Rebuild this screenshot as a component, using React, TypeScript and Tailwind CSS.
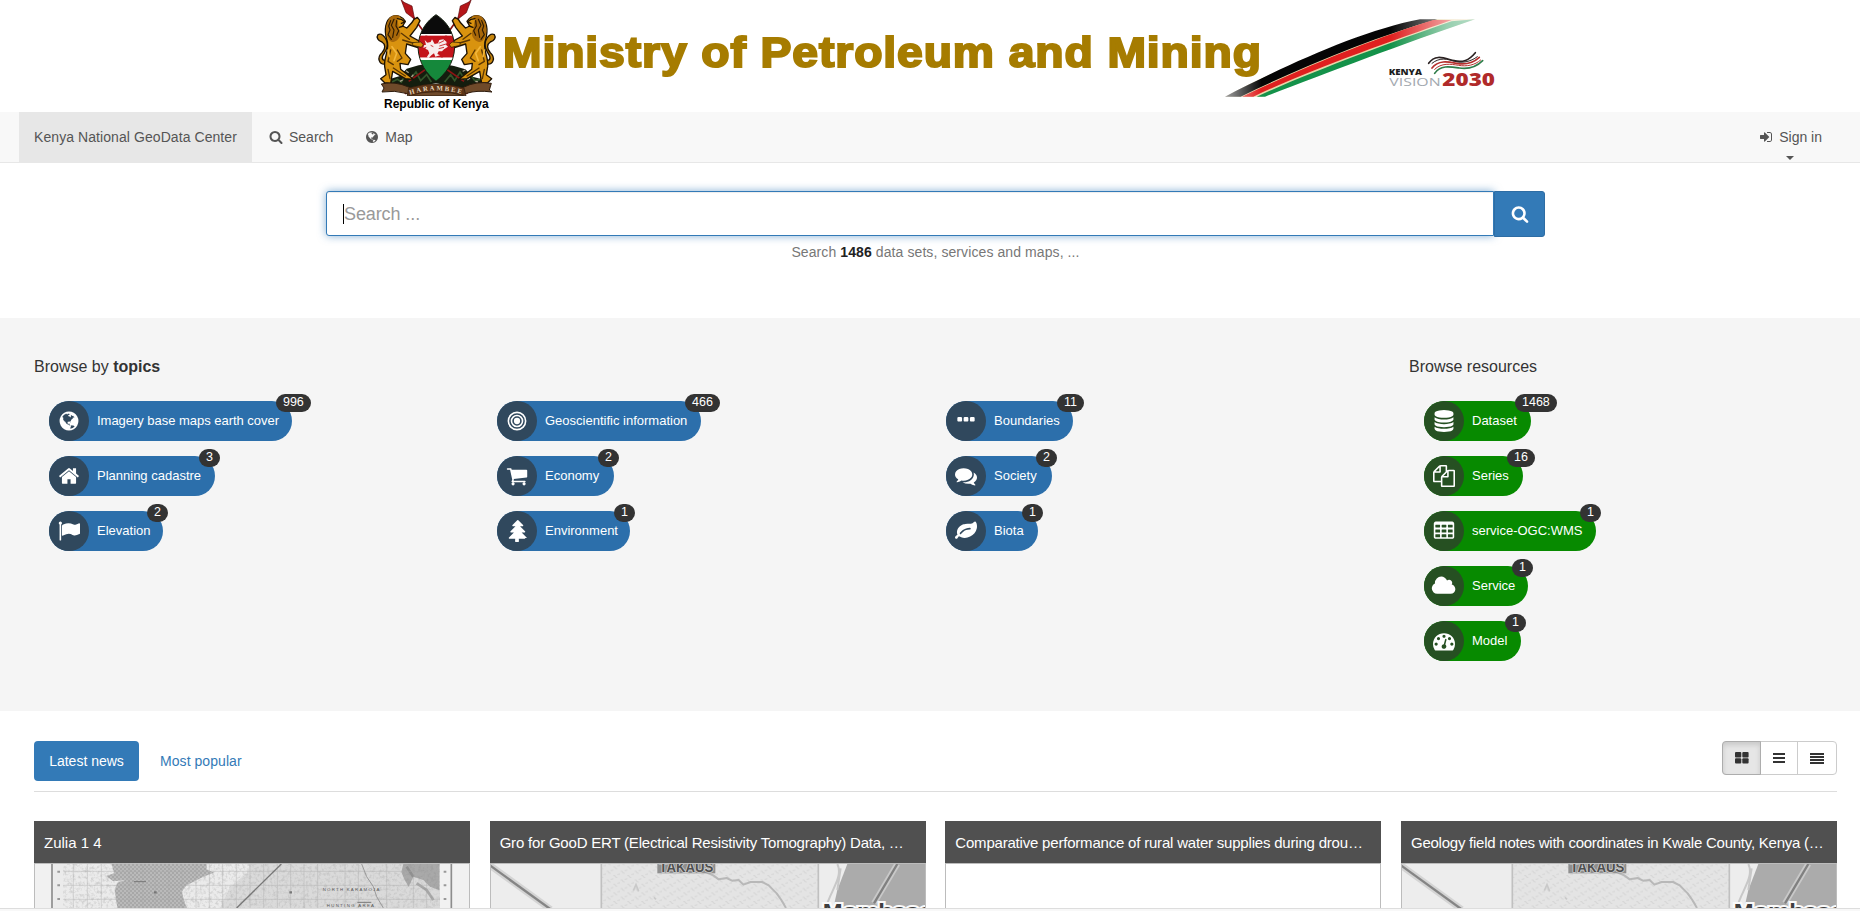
import type { ReactNode } from 'react';

type IconProps = { className?: string };

const ICONS = {
  search:
    'M1216 832q0-185-131.5-316.5t-316.5-131.5-316.5 131.5-131.5 316.5 131.5 316.5 316.5 131.5 316.5-131.5 131.5-316.5zm512 832q0 52-38 90t-90 38q-54 0-90-38l-343-342q-179 124-399 124-143 0-273.5-55.5t-225-150-150-225-55.5-273.5 55.5-273.5 150-225 225-150 273.5-55.5 273.5 55.5 225 150 150 225 55.5 273.5q0 220-124 399l343 343q37 37 37 90z',
  globe:
    'M896 128q209 0 385.5 103t279.5 279.5 103 385.5-103 385.5-279.5 279.5-385.5 103-385.5-103-279.5-279.5-103-385.5 103-385.5 279.5-279.5 385.5-103zm274 521q-2 1-9.5 9.5t-13.5 9.5q2 0 4.5-5t5-11 3.5-7q6-7 22-15 14-6 52-12 34-8 51 11-2-2 9.5-13t14.5-12q3-2 15-4.5t15-7.5l2-22q-12 1-17.5-7t-6.5-21q0 2-6 8 0-7-4.5-8t-11.5 1-9 1q-10-3-15-7.5t-8-16.5-4-15q-2-5-9.5-11t-9.5-10q-1-2-2.5-5.5t-3-6.5-4-5.5-5.5-2.5-7 5-7.5 10-4.5 5q-3-2-6-1.5t-4.5 1-4.5 3-5 3.5q-3 2-8.5 3t-8.5 2q15-5-1-11-10-4-16-3 9-4 7.5-12t-8.5-14h5q-1-4-8.5-8.5t-17.5-8.5-13-6q-8-5-34-9.5t-33-.5q-5 6-4.5 10.5t4 14 3.5 12.5q1 6-5.5 13t-6.5 12q0 7 14 15.5t10 21.5q-3 8-16 16t-16 12q-5 8-1.5 18.5t10.5 16.5q2 2 1.5 4t-3.5 4.5-5.5 4-6.5 3.5l-3 2q-11 5-20.5-6t-13.5-26q-7-25-16-30-23-8-29 1-5-13-41-26-25-9-58-4 6-1 0-15-7-15-19-12 3-6 4-17.5t1-13.5q3-13 12-23 1-1 7-8.5t9.5-13.5.5-6q35 4 50-11 5-5 11.5-17t10.5-17q9-6 14-5.5t14.5 5.5 14.5 5q14 1 15.5-11t-7.5-20q12 1 3-17-4-7-8-9-12-4-27 5-8 4 2 8-1-1-9.5 10.5t-16.5 17.5-16-5q-1-1-5.5-13.5t-9.5-13.5q-8 0-16 15 3-8-11-15t-24-8q19-12-8-27-7-4-20.5-5t-19.5 4q-5 7-5.5 11.5t5 8 10.5 5.5 11.5 4 8.5 3q14 10 8 14-2 1-8.5 3.5t-11.5 4.5-6 4q-3 4 0 14t-2 14q-5-5-9-17.5t-7-16.5q7 9-25 6l-10-1q-4 0-16 2t-20.5 1-13.5-8q-4-8 0-20 1-4 4-2-4-3-11-9.5t-10-8.5q-46 15-94 41 6 1 12-1 5-2 13-6.5t10-5.5q34-14 42-7l5-5q14 16 20 25-7-4-30-1-20 6-22 12 7 12 5 18-4-3-11.5-10t-14.5-11-15-5q-16 0-22 1-146 80-235 222 7 7 12 8 4 1 5 9t2.5 11 11.5-3q9 8 3 19 1-1 44 27 19 17 21 21 3 11-10 18-1-2-9-9t-9-4q-3 5 .5 18.5t10.5 12.5q-7 0-9.5 16t-2.5 35.5-1 23.5l2 1q-3 12 5.5 34.5t21.5 19.5q-13 3 20 43 6 8 8 9 3 2 12 7.5t15 10 10 10.5q4 5 10 22.5t14 23.5q-2 6 9.5 20t10.5 23q-1 0-2.5 1t-2.5 1q3 7 15.5 14t15.5 13q1 3 2 10t3 11 8 2q2-20-24-62-15-25-17-29-3-5-5.5-15.5t-4.5-14.5q2 0 6 1.5t8.5 3.5 7.5 4 2 3q-3 7 2 17.5t12 18.5 17 19 12 13q6 6 14 19.5t0 13.5q9 0 20 10.5t17 19.5q5 8 8 26t5 24q2 7 8.5 13.5t12.5 9.5l16 8 13 7q5 2 18.5 10.5t21.5 11.5q10 4 16 4t14.5-2.5 13.5-3.5q15-2 29 15t21 21q36 19 55 11-2 1 .5 7.5t8 15.5 9 14.5 5.5 8.5q5 6 18 15t18 15q6-4 7-9-3 8 7 20t18 10q14-3 14-32-31 15-49-18 0-1-2.5-5.5t-4-8.5-2.5-8.5 0-7.5 5-3q9 0 10-3.5t-2-12.5-4-13q-1-8-11-20t-12-15q-5 9-16 8t-16-9q0 1-1.5 5.5t-1.5 6.5q-13 0-15-1 1-3 2.5-17.5t3.5-22.5q1-4 5.5-12t7.5-14.5 4-12.5-4.5-9.5-17.5-2.5q-19 1-26 20-1 3-3 10.5t-5 11.5-9 7q-7 3-24 2t-24-5q-13-8-22.5-29t-9.5-37q0-10 2.5-26.5t3-25-5.5-24.5q3-2 9-9.5t10-10.5q2-1 4.5-1.5t4.5 0 4-1.5 3-6q-1-1-4-3-3-3-4-3 7 3 28.5-1.5t27.5 1.5q15 11 22-2 0-1-2.5-9.5t-.5-13.5q5 27 29 9 3 3 15.5 5t17.5 5q3 2 7 5.5t5.5 4.5 5-.5 8.5-6.5q10 14 12 24 11 40 19 44 7 3 11 2t4.5-9.5 0-14-1.5-12.5l-1-8v-18l-1-8q-15-3-18.5-12t1.5-18.5 15-18.5q1-1 8-3.5t15.5-6.5 12.5-8q21-19 15-35 7 0 11-9-1 0-5-3t-7.5-5-4.5-2q9-5 2-16 5-3 7.5-11t7.5-10q9 12 21 2 7-8 1-16 5-7 20.5-10.5t18.5-9.5q7 2 8-2t1-12 3-12q4-5 15-9t13-5l17-11q3-4 0-4 18 2 31-11 10-11-6-20 3-6-3-9.5t-15-5.5q3-1 11.5-.5t10.5-1.5q15-10-7-16-17-5-43 12zm-163 877q206-36 351-189-3-3-12.5-4.5t-12.5-3.5q-18-7-24-8 1-7-2.5-13t-8-9-12.5-8-11-7q-2-2-7-6t-7-5.5-7.5-4.5-8.5-2-10 1l-3 1q-3 1-5.5 2.5t-5.5 3-4 3 0 2.5q-21-17-36-22-5-1-11-5.5t-10.5-7-10-1.5-11.5 7q-5 5-6 15t-2 13q-7-5 0-17.5t2-18.5q-3-6-10.5-4.5t-12 4.5-11.5 8.5-9 6.5-8.5 5.5-8.5 7.5q-3 4-6 12t-5 11q-2-4-11.5-6.5t-9.5-5.5q2 10 4 35t5 38q7 31-12 48-27 25-29 40-4 22 12 26 0 7-8 20.5t-7 21.5q0 6 2 16z',
  home: 'M1472 992v480q0 26-19 45t-45 19h-384v-384h-256v384h-384q-26 0-45-19t-19-45v-480q0-1 .5-3t.5-3l575-474 575 474q1 2 1 6zm223-69l-62 74q-8 9-21 11h-3q-13 0-21-7l-692-577-692 577q-12 8-24 7-13-2-21-11l-62-74q-8-10-7-23.5t11-21.5l719-599q32-26 76-26t76 26l244 204v-195q0-14 9-23t23-9h192q14 0 23 9t9 23v408l219 182q10 8 11 21.5t-7 23.5z',
  flag: 'M320 256q0 72-64 110v1266q0 13-9.5 22.5t-22.5 9.5h-64q-13 0-22.5-9.5t-9.5-22.5v-1266q-64-38-64-110 0-53 37.5-90.5t90.5-37.5 90.5 37.5 37.5 90.5zm1472 64v763q0 25-12.5 38.5t-39.5 27.5q-215 116-369 116-61 0-123.5-22t-108.5-48-115.5-48-142.5-22q-192 0-464 146-17 9-33 9-26 0-45-19t-19-45v-742q0-32 31-55 21-14 79-43 236-120 421-120 107 0 200 29t219 88q38 19 88 19 54 0 117.5-21t110-47 88-47 54.5-21q26 0 45 19t19 45z',
  cart: 'M704 1536q0 52-38 90t-90 38-90-38-38-90 38-90 90-38 90 38 38 90zm896 0q0 52-38 90t-90 38-90-38-38-90 38-90 90-38 90 38 38 90zm128-1088v512q0 24-16.5 42.5t-40.5 21.5l-1044 122q13 60 13 70 0 16-24 64h920q26 0 45 19t19 45-19 45-45 19h-1024q-26 0-45-19t-19-45q0-11 8-31.5t16-36 21.5-40 15.5-29.5l-177-823h-204q-26 0-45-19t-19-45 19-45 45-19h256q16 0 28.5 6.5t19.5 15.5 13 24.5 8 26 5.5 29.5 4.5 26h1201q26 0 45 19t19 45z',
  tree: 'M1568 1472q0 26-19 45t-45 19h-462q1 17 6 87.5t5 108.5q0 25-18 42.5t-43 17.5h-192q-25 0-43-17.5t-18-42.5q0-38 5-108.5t6-87.5h-462q-26 0-45-19t-19-45 19-45l402-403h-229q-26 0-45-19t-19-45 19-45l402-403h-197q-26 0-45-19t-19-45 19-45l384-384q19-19 45-19t45 19l384 384q19 19 19 45t-19 45-45 19h-197l402 403q19 19 19 45t-19 45-45 19h-229l402 403q19 19 19 45z',
  dots: 'M576 656v192q0 40-28 68t-68 28h-192q-40 0-68-28t-28-68v-192q0-40 28-68t68-28h192q40 0 68 28t28 68zm512 0v192q0 40-28 68t-68 28h-192q-40 0-68-28t-28-68v-192q0-40 28-68t68-28h192q40 0 68 28t28 68zm512 0v192q0 40-28 68t-68 28h-192q-40 0-68-28t-28-68v-192q0-40 28-68t68-28h192q40 0 68 28t28 68z',
  comments:
    'M1408 768q0 139-94 257t-256.5 186.5-353.5 68.5q-86 0-176-16-124 88-278 128-36 9-86 16h-3q-11 0-20.5-8t-11.5-21q-1-3-1-6.5t.5-6.5 2-6l2.5-5 3.5-5.5 4-5 4.5-5 4-4.5q5-6 23-25t26-29.5 22.5-29 25-38.5 20.5-44q-124-72-195-177t-71-224q0-139 94-257t256.5-186.5 353.5-68.5 353.5 68.5 256.5 186.5 94 257zm384 256q0 120-71 224.5t-195 176.5q10 24 20.5 44t25 38.5 22.5 29 26 29.5 23 25q1 1 4 4.5t4.5 5 4 5 3.5 5.5l2.5 5 2 6 .5 6.5-1 6.5q-3 14-13 22t-22 7q-50-7-86-16-154-40-278-128-90 16-176 16-271 0-472-132 58 4 88 4 161 0 309-45t264-129q125-92 192-212t67-254q0-77-23-152 129 71 204 178t75 230z',
  leaf: 'M1280 704q0-26-19-45t-45-19q-172 0-318 49.5t-259.5 134-235.5 219.5q-19 21-19 45 0 26 19 45t45 19q24 0 45-19 27-24 74-71t67-66q137-124 268.5-176t313.5-52q26 0 45-19t19-45zm512-198q0 95-20 193-46 224-184.5 383t-357.5 268q-214 108-438 108-148 0-286-47-15-5-88-42t-96-37q-16 0-39.5 32t-45 70-52.5 70-60 32q-43 0-63.5-17.5t-45.5-59.5q-2-4-6-11t-5.5-10-3-9.5-1.5-13.5q0-35 31-73.5t68-65.5 68-56 31-48q0-4-14-38t-16-44q-9-51-9-104 0-115 43.5-220t119-184.5 170.5-139 204-95.5q55-18 145-25.5t179.5-9 178.5-6 163.5-24 113.5-56.5l29.5-29.5 29.5-28 27-20 36.5-16 43.5-4.5q39 0 70.5 46t47.5 112 24 124 8 96z',
  database:
    'M896 768q237 0 443-43t325-127v170q0 69-103 128t-280 93.5-385 34.5-385-34.5-280-93.5-103-128v-170q119 84 325 127t443 43zm0 768q237 0 443-43t325-127v170q0 69-103 128t-280 93.5-385 34.5-385-34.5-280-93.5-103-128v-170q119 84 325 127t443 43zm0-384q237 0 443-43t325-127v170q0 69-103 128t-280 93.5-385 34.5-385-34.5-280-93.5-103-128v-170q119 84 325 127t443 43zm0-1152q208 0 385 34.5t280 93.5 103 128v128q0 69-103 128t-280 93.5-385 34.5-385-34.5-280-93.5-103-128v-128q0-69 103-128t280-93.5 385-34.5z',
  files:
    'M1696 384q40 0 68 28t28 68v1216q0 40-28 68t-68 28h-960q-40 0-68-28t-28-68v-288h-544q-40 0-68-28t-28-68v-672q0-40 20-88t48-76l408-408q28-28 76-48t88-20h416q40 0 68 28t28 68v328q68-40 128-40h416zm-544 213l-299 299h299v-299zm-640-384l-299 299h299v-299zm196 647l316-316v-416h-384v416q0 40-28 68t-68 28h-416v640h512v-256q0-40 20-88t48-76zm956 804v-1152h-384v416q0 40-28 68t-68 28h-416v640h896z',
  table:
    'M224 128h1344q66 0 113 47t47 113v1088q0 66-47 113t-113 47h-1344q-66 0-113-47t-47-113v-1088q0-66 47-113t113-47zm-32 288v160q0 32 32 32h320q32 0 32-32v-160q0-32-32-32h-320q-32 0-32 32zm512 0v160q0 32 32 32h320q32 0 32-32v-160q0-32-32-32h-320q-32 0-32 32zm512 0v160q0 32 32 32h320q32 0 32-32v-160q0-32-32-32h-320q-32 0-32 32zm-1024 384v192q0 32 32 32h320q32 0 32-32v-192q0-32-32-32h-320q-32 0-32 32zm512 0v192q0 32 32 32h320q32 0 32-32v-192q0-32-32-32h-320q-32 0-32 32zm512 0v192q0 32 32 32h320q32 0 32-32v-192q0-32-32-32h-320q-32 0-32 32zm-1024 384v192q0 32 32 32h320q32 0 32-32v-192q0-32-32-32h-320q-32 0-32 32zm512 0v192q0 32 32 32h320q32 0 32-32v-192q0-32-32-32h-320q-32 0-32 32zm512 0v192q0 32 32 32h320q32 0 32-32v-192q0-32-32-32h-320q-32 0-32 32z',
  gauge:
    'M384 1152q0-53-37.5-90.5t-90.5-37.5-90.5 37.5-37.5 90.5 37.5 90.5 90.5 37.5 90.5-37.5 37.5-90.5zm192-448q0-53-37.5-90.5t-90.5-37.5-90.5 37.5-37.5 90.5 37.5 90.5 90.5 37.5 90.5-37.5 37.5-90.5zm428 481l101-382q6-26-7.5-48.5t-38.5-29.5-48 6.5-30 39.5l-101 382q-60 5-107 43.5t-63 98.5q-20 77 20 146t117 89 146-20 89-117q16-60-6-117t-72-91zm660-33q0-53-37.5-90.5t-90.5-37.5-90.5 37.5-37.5 90.5 37.5 90.5 90.5 37.5 90.5-37.5 37.5-90.5zm-640-640q0-53-37.5-90.5t-90.5-37.5-90.5 37.5-37.5 90.5 37.5 90.5 90.5 37.5 90.5-37.5 37.5-90.5zm448 192q0-53-37.5-90.5t-90.5-37.5-90.5 37.5-37.5 90.5 37.5 90.5 90.5 37.5 90.5-37.5 37.5-90.5zm320 448q0 261-141 483-19 29-54 29h-1402q-35 0-54-29-141-221-141-483 0-182 71-348t191-286 286-191 348-71 348 71 286 191 191 286 71 348z',
  signIn:
    'M1312 896q0 26-19 45l-544 544q-19 19-45 19t-45-19-19-45v-288h-448q-26 0-45-19t-19-45v-384q0-26 19-45t45-19h448v-288q0-26 19-45t45-19 45 19l544 544q19 19 19 45zm352-352v704q0 119-84.5 203.5t-203.5 84.5h-320q-13 0-22.5-9.5t-9.5-22.5q0-4-1-20t-.5-26.5 3-23.5 10-19.5 20.5-6.5h320q66 0 113-47t47-113v-704q0-66-47-113t-113-47h-312l-11.5-1-11.5-3-8-5.5-7-9-2-13.5q0-4-1-20t-.5-26.5 3-23.5 10-19.5 20.5-6.5h320q119 0 203.5 84.5t84.5 203.5z',
};

type IconName = keyof typeof ICONS | 'cloud' | 'rings';

function Icon({ name, className }: IconProps & { name: IconName }) {
  if (name === 'cloud')
    return (
      <svg viewBox="0 0 2048 1792" className={className} fill="currentColor">
        <path d="M1984 1152q0 159-112.5 271.5t-271.5 112.5h-1088q-185 0-316.5-131.5t-131.5-316.5q0-132 71-241.5t187-163.5q-2-28-2-43 0-212 150-362t362-150q158 0 286.5 88t187.5 230q70-62 166-62 106 0 181 75t75 181q0 75-41 138 129 30 213 134.5t84 239.5z" />
      </svg>
    );
  if (name === 'rings')
    return (
      <svg viewBox="0 0 1792 1792" className={className} fill="none" stroke="currentColor" strokeWidth="130">
        <circle cx="896" cy="896" r="256" fill="currentColor" stroke="none" />
        <circle cx="896" cy="896" r="450" />
        <circle cx="896" cy="896" r="703" />
      </svg>
    );
  return (
    <svg viewBox="0 0 1792 1792" className={className} fill="currentColor" fillRule={name === 'table' ? 'evenodd' : 'nonzero'}>
      <path d={ICONS[name]} />
    </svg>
  );
}

function Lion() {
  return (
    <g strokeLinejoin="round" strokeLinecap="round">
      <path d="M78 192C56 196 50 172 66 158C78 146 76 132 66 126C54 122 48 112 54 104C64 98 76 110 80 122C88 142 74 156 68 168C64 180 72 184 82 178" fill="#c8860c" stroke="#1c1204" strokeWidth="4" />
      <path d="M80 118C72 90 76 60 96 50C112 42 130 52 136 64L128 78L140 84C148 76 156 70 162 58L172 52L180 62L170 82L150 108L186 128L192 140L178 144L140 132L136 160L152 178L144 194L120 190L122 208L160 238L136 236L98 214L92 250L74 248L62 236L78 224L74 200C70 170 92 146 80 118Z" fill="#d9930f" stroke="#1c1204" strokeWidth="4" />
      <path d="M84 62C90 46 108 42 122 50L110 56C118 68 112 82 120 92C124 106 118 116 106 124C96 130 84 122 80 104C76 90 78 74 84 62Z" fill="#a8680a" />
      <path d="M92 62l-6 16 4 12-6 14 10 14M102 58l-8 18 8 14-4 22M110 62l-2 16 8 14-6 14" stroke="#2e1b03" strokeWidth="3.5" fill="none" />
      <path d="M112 56l12 2 10 8-10 4M118 82l12-4" stroke="#1c1002" strokeWidth="4" fill="none" />
      <path d="M124 100l24 18M128 120l40 12M92 150l-8 34 16 10M112 150l14 24-14 10M100 204l36 24M84 208l6 28" stroke="#5a3603" strokeWidth="4" fill="none" />
      <path d="M96 140l14 20-8 22M84 150l4 20" stroke="#f2b63a" strokeWidth="5" fill="none" />
    </g>
  );
}

function Spear() {
  return (
    <g>
      <path d="M128 6L262 196L322 282" stroke="#8c1414" strokeWidth="5" fill="none" />
      <path d="M122 -4L130 6L156 18L164 58L138 38Z" fill="#b5161a" stroke="#5b0a0c" strokeWidth="2" />
    </g>
  );
}

function CoatOfArms() {
  return (
    <svg viewBox="0 0 429 288" className="block h-24 w-[143px]">
      <Spear />
      <g transform="translate(457 0) scale(-1 1)">
        <Spear />
      </g>
      <path d="M76 258L92 236L120 228L140 206L176 196L228 188L282 198L316 208L338 230L366 238L384 262L316 266L228 250L140 266Z" fill="#141d0e" />
      <path d="M96 246l16-8 12 8 14-24 14 14 16-20 14 26 18-18 14 22M254 246l18-22 12 18 16-26 14 22 18-14 12 18 18-4" stroke="#33552a" strokeWidth="5" fill="none" />
      <path d="M138 212l8 6M160 224l-8 10M308 214l8-4M330 234l-8 6M120 244l8-4M354 246l-8-2" stroke="#a9a08c" strokeWidth="4" />
      <path d="M146 244L228 186M312 244L228 186" stroke="#8c1414" strokeWidth="5" />
      <Lion />
      <g transform="translate(457 0) scale(-1 1)">
        <Lion />
      </g>
      <clipPath id="shield">
        <path d="M228 44C202 62 176 92 174 142C176 190 200 222 228 244C256 222 282 190 284 142C282 92 256 62 228 44Z" />
      </clipPath>
      <g clipPath="url(#shield)">
        <rect x="170" y="40" width="120" height="62" fill="#0b0b0b" />
        <rect x="170" y="102" width="120" height="5" fill="#fff" />
        <rect x="170" y="107" width="120" height="66" fill="#c4141b" />
        <rect x="170" y="173" width="120" height="7" fill="#fff" />
        <rect x="170" y="180" width="120" height="66" fill="#15883b" />
        <path d="M194 120l8 8 10-2 4-8 8 14 10-2 4-10 12-2 10 8-2 8 6 6-12 8-6 6-10 0-4 8 8 4-14 4-4-10-8 6-8 8-6-2 8-12-4-10-8-4 4-6-10 4 2-8 6-2Z" fill="#f8ecec" />
        <path d="M236 130l16-8M238 138l20-6M236 146l16-4M212 136l8 4" stroke="#c4141b" strokeWidth="2.5" />
      </g>
      <path d="M228 44C202 62 176 92 174 142C176 190 200 222 228 244C256 222 282 190 284 142C282 92 256 62 228 44Z" fill="none" stroke="#15200f" strokeWidth="3" />
      <path d="M158 128l24-2 8 8-6 8-26-6ZM300 128l-24-2-8 8 6 8 26-6Z" fill="#d9930f" stroke="#2a1a04" strokeWidth="2" />
      <path d="M64 252Q104 242 148 262Q228 282 310 262Q350 242 394 250L388 270L396 276Q350 270 320 280L306 288H152L138 280Q104 270 66 276L72 264Z" fill="#6f4a2a" stroke="#2c1a0c" strokeWidth="3" />
      <path d="M146 264Q228 240 312 264L318 288Q228 262 142 288Z" fill="#5c3517" stroke="#2c1a0c" strokeWidth="2" />
      <path id="motto" d="M150 284Q228 258 312 284" fill="none" />
      <text fontFamily="'Liberation Serif', serif" fontWeight="bold" fontSize="20" fill="#e8d9c0">
        <textPath href="#motto" textLength="156">HARAMBEE</textPath>
      </text>
    </svg>
  );
}

function VisionRibbon() {
  return (
    <svg viewBox="0 0 960 336" className="block h-28 w-80 shrink-0">
      <defs>
        <linearGradient id="fade" gradientUnits="userSpaceOnUse" x1="70" x2="830" y1="0" y2="0">
          <stop offset="0" stopColor="#fff" stopOpacity=".35" />
          <stop offset=".15" stopColor="#fff" />
          <stop offset=".66" stopColor="#fff" />
          <stop offset=".88" stopColor="#fff" stopOpacity=".45" />
          <stop offset="1" stopColor="#fff" stopOpacity=".3" />
        </linearGradient>
        <mask id="ribbon">
          <rect width="960" height="336" fill="url(#fade)" />
        </mask>
      </defs>
      <g mask="url(#ribbon)">
        <path d="M75 290C250 200 480 95 700 57L825 58C600 132 365 222 185 290Z" fill="#e8d5a8" />
        <path d="M75 290C250 200 480 92 660 58L712 58C520 112 300 204 122 290Z" fill="#050505" />
        <path d="M126 290C300 207 522 115 700 60L755 60C560 128 325 211 160 290Z" fill="#e0201f" />
        <path d="M170 290C340 213 570 128 755 64L825 58C602 134 367 224 195 290Z" fill="#14924a" />
      </g>
      <g fill="none" strokeLinecap="round">
        <path d="M686 190C706 160 736 176 762 182S806 182 826 158" stroke="#2b2222" strokeWidth="5" />
        <path d="M696 190C720 170 744 178 764 184S812 186 832 170" stroke="#2b2222" strokeWidth="3" />
        <path d="M696 204C716 178 748 186 770 190S816 192 838 172" stroke="#b5302d" strokeWidth="5" />
        <path d="M704 208C724 188 752 192 776 196S824 196 842 180" stroke="#b5302d" strokeWidth="3" />
        <path d="M704 220C720 194 752 200 778 204S826 204 848 182" stroke="#2f7d4a" strokeWidth="5" />
      </g>
      <g fontFamily="'Open Sans', 'Liberation Sans', sans-serif">
        <text x="566" y="225" fontSize="24" fontWeight="800" fill="#1d1d1d" textLength="100" lengthAdjust="spacingAndGlyphs">KENYA</text>
        <text x="568" y="257" fontSize="35" fontWeight="400" fill="#a3a9b0" textLength="154" lengthAdjust="spacingAndGlyphs">VISION</text>
        <text x="727" y="257" fontSize="53" fontWeight="800" fill="#b02a2a" textLength="158" lengthAdjust="spacingAndGlyphs">2030</text>
      </g>
    </svg>
  );
}

type ChipData = { icon: IconName; label: string; count: number; width: string };

function Chip({ icon, label, count, width, green }: ChipData & { green?: boolean }) {
  return (
    <a className={`relative flex h-10 items-center rounded-full text-white ${width} ${green ? 'bg-[#078a00]' : 'bg-[#2c6fab]'}`}>
      <span className={`flex size-10 shrink-0 items-center justify-center rounded-full pb-px ${green ? 'bg-[#265022]' : 'bg-[#30485d]'}`}>
        <Icon name={icon} className="h-[22px]" />
      </span>
      <span className="flex-1 pb-[2px] pl-2 text-[13px] leading-none whitespace-nowrap">{label}</span>
      <span className="absolute -top-[7px] left-[calc(100%-16px)] h-[18px] rounded-[10px] bg-[#333] px-[7px] text-[12.5px] leading-[17.5px]">{count}</span>
    </a>
  );
}

const TOPICS: ChipData[][] = [
  [
    { icon: 'globe', label: 'Imagery base maps earth cover', count: 996, width: 'w-[243px] tracking-[-0.03px]' },
    { icon: 'home', label: 'Planning cadastre', count: 3, width: 'w-[166px]' },
    { icon: 'flag', label: 'Elevation', count: 2, width: 'w-[114px]' },
  ],
  [
    { icon: 'rings', label: 'Geoscientific information', count: 466, width: 'w-[204px]' },
    { icon: 'cart', label: 'Economy', count: 2, width: 'w-[117px]' },
    { icon: 'tree', label: 'Environment', count: 1, width: 'w-[133px]' },
  ],
  [
    { icon: 'dots', label: 'Boundaries', count: 11, width: 'w-[127px]' },
    { icon: 'comments', label: 'Society', count: 2, width: 'w-[106px]' },
    { icon: 'leaf', label: 'Biota', count: 1, width: 'w-[92px]' },
  ],
];

const RESOURCES: ChipData[] = [
  { icon: 'database', label: 'Dataset', count: 1468, width: 'w-[107px]' },
  { icon: 'files', label: 'Series', count: 16, width: 'w-[99px]' },
  { icon: 'table', label: 'service-OGC:WMS', count: 1, width: 'w-[172px]' },
  { icon: 'cloud', label: 'Service', count: 1, width: 'w-[104px]' },
  { icon: 'gauge', label: 'Model', count: 1, width: 'w-[97px]' },
];

function TopoMap() {
  return (
    <svg viewBox="105 492 1302 132" preserveAspectRatio="none" className="block h-full w-full">
      <defs>
        <filter id="grain" x="0" y="0" width="100%" height="100%">
          <feTurbulence type="fractalNoise" baseFrequency="0.11" numOctaves="3" seed="4" />
          <feColorMatrix values="0 0 0 0 .45  0 0 0 0 .45  0 0 0 0 .45  2.6 0 0 0 -1.15" />
        </filter>
        <pattern id="stipple" width="12" height="12" patternUnits="userSpaceOnUse">
          <rect width="12" height="12" fill="#bababa" />
          <rect x="1" y="1" width="4" height="4" fill="#909090" />
          <rect x="7" y="7" width="4" height="4" fill="#959595" />
        </pattern>
      </defs>
      <rect x="105" y="492" width="1302" height="132" fill="#f1f1f1" />
      <rect x="160" y="492" width="1160" height="132" fill="#ebebeb" />
      <path d="M750 492H1320V624H660L690 560L740 520Z" fill="#dadada" />
      <rect x="190" y="492" width="1130" height="132" filter="url(#grain)" opacity=".5" />
      <path d="M335 492H620V508L642 518L610 530L560 556L545 575L552 600L560 624H352L344 570L352 548L376 540L340 544L318 528L342 520Z" fill="url(#stipple)" />
      <path d="M1210 492H1318V570L1290 560L1270 540L1240 530L1226 560L1214 540L1204 516Z" fill="#777" opacity=".5" />
      <path d="M1250 550l30 20 20 30M1220 500l20 30" stroke="#777" strokeWidth="8" opacity=".5" fill="none" />
      <path d="M190 514H1320M190 556H1320M190 598H1320M220 492V624M262 492V624M304 492V624M387 492V624M428 492V624M466 492V624M506 492V624M546 492V624M588 492V624M628 492V624M668 492V624M709 492V624M750 492V624M791 492V624M832 492V624M872 492V624M912 492V624M953 492V624M1035 492V624M1075 492V624M1160 492V624M1240 492V624M1280 492V624" stroke="#a8a8a8" strokeWidth="2" opacity=".6" />
      <path d="M156 492V624M1354 492V624" stroke="#8d8d8d" strokeWidth="5" />
      <path d="M844 492L710 624" stroke="#777" strokeWidth="4" />
      <path d="M1085 492L1100 530L1120 560L1130 590L1150 624" stroke="#999" strokeWidth="3" fill="none" />
      <path d="M172 515h8M172 556h8M172 597h8M1331 515h8M1331 556h8M1331 597h8" stroke="#999" strokeWidth="6" />
      <path d="M462 577h8M868 577h8" stroke="#777" strokeWidth="7" />
      <path d="M1072 607h42M402 545h36" stroke="#777" strokeWidth="3" />
      <g fontFamily="'Liberation Sans', sans-serif" fontSize="13" fill="#555">
        <text x="968" y="574" textLength="170">NORTH KARAMOJA</text>
        <text x="980" y="622" textLength="142">HUNTING AREA</text>
      </g>
    </svg>
  );
}

function StreetMap({ id }: { id: string }) {
  return (
    <svg viewBox="33 192 1302 132" preserveAspectRatio="none" className="block h-full w-full">
      <defs>
        <pattern id={id} width="42" height="26" patternUnits="userSpaceOnUse">
          <rect width="42" height="26" fill="#e4e4e4" />
          <path d="M2 6h4l3 4 5 2M22 19h4l3 4 5 2M14 4l8-2M34 16l8-2" stroke="#d6d6d6" strokeWidth="3" fill="none" />
        </pattern>
      </defs>
      <rect x="33" y="192" width="1302" height="132" fill="#ededed" />
      <rect x="364" y="192" width="650" height="132" fill={`url(#${id})`} />
      <path d="M364 192V324M1015 192V324" stroke="#c0c0c0" strokeWidth="5" />
      <path d="M24 192L212 328" stroke="#d4d4d4" strokeWidth="20" />
      <path d="M24 192L212 328" stroke="#858585" strokeWidth="7" />
      <path d="M1102 192H1335V324H1060L1072 270Z" fill="#ababab" />
      <path d="M1072 192C1086 220 1068 250 1050 290L1036 324M1082 205L1072 270" stroke="#c8c8c8" strokeWidth="6" fill="none" />
      <path d="M1252 192L1182 310" stroke="#c9c9c9" strokeWidth="18" />
      <path d="M1252 192L1182 310" stroke="#808080" strokeWidth="7" />
      <path d="M680 218L700 226L716 238L740 234L756 242L776 240L790 254L812 246L846 246L866 256L890 280L904 300L918 324" stroke="#b8b8b8" strokeWidth="6" fill="none" strokeLinejoin="round" />
      <path d="M460 272l8-18 8 20M522 292l6 6" stroke="#c9c9c9" strokeWidth="5" fill="none" />
      <rect x="532" y="188" width="174" height="32" fill="#8f8f8f" />
      <text x="538" y="215" fontFamily="'Liberation Sans', sans-serif" fontWeight="bold" fontSize="44" fill="#4f4f4f" stroke="#d0d0d0" strokeWidth="5" paintOrder="stroke" textLength="162" lengthAdjust="spacingAndGlyphs">TAKAUS</text>
      <text x="1028" y="353" fontFamily="'Liberation Sans', sans-serif" fontWeight="bold" fontSize="58" fill="#3f3f3f" stroke="#fafafa" strokeWidth="12" paintOrder="stroke" textLength="330" lengthAdjust="spacingAndGlyphs">Mombasa</text>
    </svg>
  );
}

function Card({ title, tracking, children }: { title: string; tracking?: string; children?: ReactNode }) {
  return (
    <article className="flex h-[200px] min-w-0 flex-col">
      <h3 className={`h-[42px] shrink-0 bg-[#505050] px-2.5 text-[15px] leading-[43px] whitespace-nowrap text-white ${tracking ?? ''}`}>{title}</h3>
      <div className="flex-1 border border-[#bcbcbc] bg-white">
        <div className="h-11">{children}</div>
      </div>
    </article>
  );
}

export default function App() {
  return (
    <div className="flex h-[911px] w-[1860px] flex-col overflow-hidden bg-white font-['Liberation_Sans',Arial,sans-serif] text-sm text-[#333]">
      <header className="flex h-28 shrink-0 overflow-hidden pl-[360px]">
        <div className="w-[143px] shrink-0">
          <CoatOfArms />
          <p className="pl-6 text-xs leading-4 font-bold whitespace-nowrap text-black">Republic of Kenya</p>
        </div>
        <h1 className="w-[697px] shrink-0 origin-left scale-x-[1.1025] pt-[27px] text-[42px] leading-[52px] font-bold tracking-[0.8px] whitespace-nowrap text-[#a67c00] [-webkit-text-stroke:2px_#a67c00]">
          Ministry of Petroleum and Mining
        </h1>
        <VisionRibbon />
      </header>

      <nav className="flex h-[51px] shrink-0 border-b border-[#e7e7e7] bg-[#f8f8f8] pr-[23px] pl-[19px] text-[#555]">
        <a className="flex w-[233px] items-center justify-center bg-[#e7e7e7] pb-[1px] tracking-[0.07px]">Kenya National GeoData Center</a>
        <a className="flex items-center gap-1 px-[15px] pb-[1px]">
          <span className="flex w-[18px] justify-center"><Icon name="search" className="h-3.5" /></span>Search
        </a>
        <a className="flex items-center gap-1 px-[15px] pb-[1px]">
          <span className="flex w-[18px] justify-center"><Icon name="globe" className="h-3.5" /></span>Map
        </a>
        <a className="relative ml-auto flex items-center gap-1 px-[15px] pb-[1px]">
          <span className="flex w-[18px] justify-center"><Icon name="signIn" className="h-3.5" /></span>Sign in
          <span className="absolute bottom-[2px] left-[44px] border-x-4 border-t-4 border-x-transparent border-t-[#555]" />
        </a>
      </nav>

      <section className="flex h-[155px] shrink-0 flex-col items-center pt-7 pl-[11px]">
        <div className="flex w-[1219px]">
          <div className="flex h-[45px] flex-1 items-center rounded-l-[3px] border border-[#337ab7] bg-white pl-4 shadow-[inset_0_1px_1px_rgba(0,0,0,.075),0_0_8px_rgba(51,122,183,.6)]">
            <span className="h-5 w-px bg-black" />
            <span className="text-lg tracking-[-0.1px] text-[#999]">Search ...</span>
          </div>
          <button className="relative flex h-[46px] w-[51px] items-center justify-center rounded-r-[3px] border border-[#2e6da4] bg-[#337ab7] text-white">
            <Icon name="search" className="h-[18px]" />
          </button>
        </div>
        <p className="mt-[5px] leading-5 tracking-[0.09px] text-[#777]">
          Search <b className="text-[#222]">1486</b> data sets, services and maps, ...
        </p>
      </section>

      <section className="flex h-[393px] shrink-0 bg-[#f5f5f5] pt-10 pl-[34px]">
        <div className="w-[1375px]">
          <h2 className="text-base leading-[18px]">Browse by <b>topics</b></h2>
          <div className="mt-[25px] grid grid-cols-[448px_449px_448px]">
            {TOPICS.map((col, i) => (
              <div key={i} className="flex flex-col gap-[15px] pl-[15px]">
                {col.map((c) => <Chip key={c.label} {...c} />)}
              </div>
            ))}
          </div>
        </div>
        <div>
          <h2 className="text-base leading-[18px]">Browse resources</h2>
          <div className="mt-[25px] flex flex-col gap-[15px] pl-[15px]">
            {RESOURCES.map((c) => <Chip key={c.label} {...c} green />)}
          </div>
        </div>
      </section>

      <main className="min-h-0 flex-1 overflow-hidden pt-[30px] pr-[23px] pl-[34px]">
        <div className="flex h-[51px] justify-between border-b border-[#ddd]">
          <div className="flex h-10 text-sm leading-10">
            <a className="w-[105px] rounded bg-[#337ab7] text-center text-white">Latest news</a>
            <a className="pl-[21px] tracking-[0.06px] text-[#337ab7]">Most popular</a>
          </div>
          <div className="flex h-[34px] w-[115px] rounded border border-[#ccc] text-[#333]">
            <button className="-m-px flex w-[39px] items-center justify-center rounded-l border border-[#adadad] bg-[#e6e6e6] shadow-[inset_0_3px_5px_rgba(0,0,0,.125)]">
              <svg viewBox="0 0 14 12" className="h-3 w-3.5" fill="currentColor">
                <rect width="6.3" height="5.4" rx="1" />
                <rect x="7.3" width="6.3" height="5.4" rx="1" />
                <rect y="6.2" width="6.3" height="5.4" rx="1" />
                <rect x="7.3" y="6.2" width="6.3" height="5.4" rx="1" />
              </svg>
            </button>
            <button className="ml-px flex w-[37px] items-center justify-center border-r border-[#ccc]">
              <svg viewBox="0 0 12 10" className="h-2.5 w-3" fill="currentColor">
                <path d="M0 0h12v2H0zM0 4h12v2H0zM0 8h12v2H0z" />
              </svg>
            </button>
            <button className="flex flex-1 items-center justify-center">
              <svg viewBox="0 0 14 11" className="h-[11px] w-3.5" fill="currentColor">
                <path d="M0 0h14v2H0zM0 3h14v2H0zM0 6h14v2H0zM0 9h14v2H0z" />
              </svg>
            </button>
          </div>
        </div>
        <div className="mt-[29px] grid grid-cols-[436px_436px_436px_436px] justify-between">
          <Card title="Zulia 1 4"><TopoMap /></Card>
          <Card title="Gro for GooD ERT (Electrical Resistivity Tomography) Data, …" tracking="tracking-[-0.2px]"><StreetMap id="dots-a" /></Card>
          <Card title="Comparative performance of rural water supplies during drou…" tracking="tracking-[-0.2px]" />
          <Card title="Geology field notes with coordinates in Kwale County, Kenya (…" tracking="tracking-[-0.24px]"><StreetMap id="dots-b" /></Card>
        </div>
      </main>

      <footer className="h-[3px] shrink-0 border-t border-[#ddd] bg-[#f8f8f8]" />
    </div>
  );
}
